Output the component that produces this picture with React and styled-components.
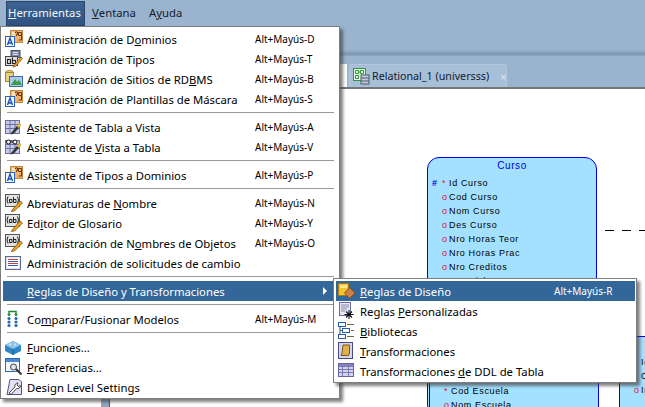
import React from 'react';
import styled, { createGlobalStyle } from 'styled-components';

const GlobalStyle = createGlobalStyle`
  html, body { margin: 0; padding: 0; background: #fff; }
  body { font-family: "Noto Sans", "Liberation Sans", sans-serif; }
`;

// --- Window chrome ---

const Frame = styled.div`
  position: relative;
  width: 645px;
  height: 407px;
  overflow: hidden;
  display: flex;
  flex-direction: column;
  background: #9ab4d0;
`;

const MenuBar = styled.div`
  height: 25px;
  margin-top: 1px;
  padding-left: 6px;
  display: flex;
  align-items: stretch;
  flex-shrink: 0;
`;

const BarItem = styled.div`
  display: flex;
  align-items: center;
  width: ${p => p.$w}px;
  padding-left: ${p => p.$pad}px;
  padding-bottom: 2px;
  box-sizing: border-box;
  font-size: 11.3px;
  color: ${p => (p.$open ? '#f2f6fb' : '#14202e')};
  background: ${p => (p.$open ? 'linear-gradient(180deg, #3d6494, #2f5180)' : 'transparent')};
  box-shadow: ${p => (p.$open ? 'inset 0 0 0 1px #2a466c' : 'none')};
`;

const ToolBand = styled.div`
  height: 30px;
  flex-shrink: 0;
  background: linear-gradient(180deg, #9ab4d0 0, #9ab4d0 24px, #7d97b3 28px, #8ea8c4 30px);
`;

const TabStrip = styled.div`
  height: 33px;
  flex-shrink: 0;
  display: flex;
  align-items: flex-end;
  border-bottom: 2px solid #777;
  box-sizing: border-box;
`;

const ActiveTab = styled.div`
  width: 347px;
  height: 23px;
  background: #fff;
  flex-shrink: 0;
`;

const Tab = styled.div`
  margin-left: 2px;
  width: 158px;
  height: 23px;
  box-sizing: border-box;
  padding-left: 2px;
  display: flex;
  align-items: center;
  gap: 2px;
  background: #a8bfd8;
  border: 1px solid #b4c8dd;
  border-bottom: none;
  border-radius: 4px 4px 0 0;
  font-size: 10.7px;
  color: #14202e;
  white-space: nowrap;
`;

const TabClose = styled.span`
  margin-left: 9px;
  color: #d5e0ec;
  font-size: 11px;
  font-weight: 700;
`;

// --- Diagram canvas ---

const Workspace = styled.div`
  flex: 1;
  display: flex;
  background: #fff;
  min-height: 0;
`;

const SidePane = styled.div`
  width: 101px;
  flex-shrink: 0;
`;

const Splitter = styled.div`
  width: 8px;
  flex-shrink: 0;
  background: #8fa6c2;
  border-right: 1px solid #555;
`;

const Diagram = styled.div`
  position: relative;
  flex: 1;
  overflow: hidden;
`;

const Entity = styled.div`
  position: absolute;
  left: ${p => p.$x}px;
  top: ${p => p.$y}px;
  width: ${p => p.$w}px;
  height: ${p => p.$h}px;
  box-sizing: border-box;
  background: #a4e0ff;
  border: 1px solid #0000ee;
  border-radius: 12px;
  font-family: "Liberation Sans", sans-serif;
  font-size: 9px;
  letter-spacing: 0.65px;
  color: #000;
`;

const EntityTitle = styled.div`
  height: 17px;
  line-height: 15px;
  text-align: center;
  color: #0000ee;
  font-size: 10px;
  letter-spacing: 0.6px;
`;

const EntityAttrs = styled.div`
  padding-top: ${p => p.$pad}px;
`;

const Attr = styled.div`
  height: 14px;
  line-height: 14px;
  display: flex;
  white-space: nowrap;
`;

const Key = styled.span`
  width: 10px;
  padding-left: 4px;
  color: #0000ee;
  font-weight: 700;
  flex-shrink: 0;
`;

const Flag = styled.span`
  width: 7px;
  color: #e0103a;
  flex-shrink: 0;
  letter-spacing: 0;
`;

const Relation = styled.div`
  position: absolute;
  left: 487px;
  top: 141px;
  width: 48px;
  height: 1px;
  background: repeating-linear-gradient(90deg, transparent 0 8px, #000 8px 17px);
`;

// --- Menus ---

const Popup = styled.div`
  position: absolute;
  left: ${p => p.$x}px;
  top: ${p => p.$y}px;
  width: ${p => p.$w}px;
  box-sizing: border-box;
  padding: 2px 1px 1px 2px;
  background: #fff;
  border: 1px solid #7d7d7d;
  box-shadow: 3px 3px 3px rgba(60, 60, 60, 0.65);
  color: #000;
  font-size: 11.3px;
`;

const Row = styled.div`
  height: 20px;
  display: flex;
  align-items: center;
  padding-left: 2px;
  background: ${p => (p.$hot ? '#336699' : 'transparent')};
  color: ${p => (p.$hot ? '#fff' : '#000')};
  white-space: nowrap;
`;

const IconSlot = styled.span`
  width: 18px;
  height: 18px;
  flex-shrink: 0;
  display: block;
  svg { display: block; }
`;

const Label = styled.span`
  width: ${p => p.$w}px;
  margin-left: 4px;
  flex-shrink: 0;
`;

const Shortcut = styled.span`
  font-size: 10px;
`;

const Arrow = styled.span`
  margin-left: 68px;
  width: 0;
  height: 0;
  border-left: 4px solid #fff;
  border-top: 4px solid transparent;
  border-bottom: 4px solid transparent;
`;

const Separator = styled.div`
  height: 8px;
  box-sizing: border-box;
  padding-top: 3px;
  margin: 0 4px;
  &::before {
    content: '';
    display: block;
    height: 1px;
    background: #9a9a9a;
  }
`;

// --- Icons ---

const Svg = ({ children }) => (
  <svg width="18" height="18" viewBox="0 0 18 18">{children}</svg>
);

const DomainIcon = () => (
  <Svg>
    <rect x="5.5" y="0.5" width="12" height="12" fill="#f2b26c" stroke="#c08840" />
    <rect x="7" y="2" width="3" height="4" fill="#fbe0b8" />
    <path d="M10.5 3V2h2v2.5h-1V6" fill="none" stroke="#6a3410" />
    <path d="M13.5 2.5h3v3h-3zM16.5 5.5V10h-3" fill="none" stroke="#6a3410" />
    <rect x="0.5" y="6.5" width="9" height="10" fill="#f2f7ff" stroke="#2a66c0" />
    <path d="M2.5 15l2.5-7 2.5 7M3.5 13h3" fill="none" stroke="#1a4fb0" strokeWidth="1.3" />
  </Svg>
);

const TypeIcon = () => (
  <Svg>
    <rect x="6" y="0.5" width="9" height="7" fill="#7d8aa8" stroke="#444c66" />
    <path d="M8 2.5h5M8 4.5h5" stroke="#d8deea" />
    <rect x="0.5" y="6.5" width="12" height="9" fill="#dcdcdc" stroke="#444" />
    <path d="M2.5 9.5h3v4h-3zM7.5 7.5v6h3v-3h-3" fill="none" stroke="#222" strokeWidth="1.1" />
    <path d="M9 15l7-8 1.5 1.5-7 8-2.5.5z" fill="#f0a020" stroke="#7a4a08" strokeWidth=".7" />
  </Svg>
);

const SiteIcon = () => (
  <Svg>
    <ellipse cx="4.5" cy="2.5" rx="4" ry="2" fill="#e8d080" stroke="#a08838" />
    <rect x="0.5" y="2.5" width="8" height="9" fill="#e8d080" stroke="#a08838" />
    <rect x="4.5" y="6.5" width="13" height="10" fill="#a8cce8" stroke="#3a6ea8" />
    <path d="M6 15l4-6 2 3 2-2 3 5z" fill="#3c9a48" />
  </Svg>
);

const TableWizardIcon = ({ glasses }) => (
  <Svg>
    <rect x="0.5" y="2.5" width="14" height="13" fill="#c8cce8" stroke="#6a70a0" />
    <path d="M0.5 6.5h14M0.5 10.5h14M5 2.5v13M10 2.5v13" stroke="#6a70a0" />
    {glasses && (
      <>
        <circle cx="3.5" cy="4" r="2" fill="#fff" stroke="#111" />
        <circle cx="10" cy="4" r="2" fill="#fff" stroke="#111" />
        <path d="M5.5 4h2.5" stroke="#111" />
      </>
    )}
    <path d="M6 15l6-7 2 2-6 6-2.5.5z" fill="#333" />
    <path d="M12 8l2-3 2 1.5-2 3.5z" fill="#f0c040" stroke="#a07a10" strokeWidth=".5" />
  </Svg>
);

const AbbrevIcon = () => (
  <Svg>
    <rect x="0.5" y="0.5" width="14" height="12" fill="#e4e4e4" stroke="#555" />
    <path d="M3 2.5l-1 3.5 1 3.5M12.5 2.5l1 3.5-1 3.5M4.5 5.5h2.5v3H4.5zM8.5 3v5.5h2.5V5.5H8.5" fill="none" stroke="#222" />
    <path d="M7 16l8-9 2.5 2-8 8-3 .5z" fill="#f0a020" stroke="#6e4406" strokeWidth=".7" />
  </Svg>
);

const ListIcon = () => (
  <Svg>
    <rect x="0.5" y="2.5" width="15" height="13" fill="#dfe6f4" stroke="#5a6a98" />
    <rect x="2" y="4" width="12" height="10" fill="#fff" />
    <path d="M3 5.5h10" stroke="#d04030" />
    <path d="M3 7.5h10" stroke="#3060c0" />
    <path d="M3 9.5h10" stroke="#d04030" />
    <path d="M3 11.5h10" stroke="#3060c0" />
  </Svg>
);

const CompareIcon = () => (
  <Svg>
    <path d="M4 4.5V1.5h7V4.5" fill="none" stroke="#1c8a30" strokeWidth="1.5" />
    <path d="M2 4h4L4 6.5zM9 4h4l-2 2.5z" fill="#1c8a30" />
    <g fill="#2c68b0">
      <circle cx="4" cy="8.5" r="1.6" />
      <circle cx="11" cy="8.5" r="1.6" />
      <circle cx="4" cy="12" r="1.6" />
      <circle cx="11" cy="12" r="1.6" />
      <circle cx="4" cy="15.5" r="1.6" />
      <circle cx="11" cy="15.5" r="1.6" />
    </g>
  </Svg>
);

const BlockIcon = () => (
  <Svg>
    <path d="M0 7l8-4 8 4v6l-8 4-8-4z" fill="#2f86c4" />
    <path d="M0 7l8 4 8-4-8-4z" fill="#8cc4ea" />
    <path d="M8 11v6" stroke="#1e5e90" />
    <circle cx="5" cy="6.5" r="1.2" fill="#c4e2f6" />
    <circle cx="10" cy="6.5" r="1.2" fill="#c4e2f6" />
  </Svg>
);

const PrefsIcon = () => (
  <Svg>
    <rect x="0.5" y="0.5" width="14" height="13" fill="#eef5ff" stroke="#2f6cb8" />
    <rect x="1" y="1" width="13" height="3" fill="#4a8ad4" />
    <circle cx="8.5" cy="9" r="3" fill="#e4e4e4" stroke="#444" />
    <path d="M11 11l5.5 5.5" stroke="#333" strokeWidth="2" />
  </Svg>
);

const WrenchIcon = () => (
  <Svg>
    <path d="M5 1.5h9l2.5 2.5v12.5H2z" fill="#e2e0f2" stroke="#55527a" />
    <path d="M4 15l6-6a3 3 0 0 1 3-4l-1 2 1.5 1.5 2-1a3 3 0 0 1-4 3l-5.5 6z" fill="#fff" stroke="#333" strokeWidth=".9" />
  </Svg>
);

const RulesIcon = () => (
  <Svg>
    <path d="M0.5 1.5h10v12h-10z" fill="#f4c22c" stroke="#a87a10" />
    <path d="M2 3h7v3H2z" fill="#fbe68c" />
    <path d="M6.5 11l5-5.5 5.5 5.5-5.5 5.5z" fill="#cc8244" stroke="#7a4418" strokeWidth=".8" />
  </Svg>
);

const CustomRulesIcon = () => (
  <Svg>
    <rect x="1.5" y="0.5" width="11" height="13" fill="#e8e8f6" stroke="#6a6a98" />
    <path d="M3 3h8M3 5h8M3 7h6M3 9h4" stroke="#8888b0" />
    <path d="M11 8v9M6.5 12.5h9M8 9.5l6 6M14 9.5l-6 6" stroke="#111" strokeWidth="1.1" />
  </Svg>
);

const LibraryIcon = () => (
  <Svg>
    <rect x="0.5" y="0.5" width="7" height="4" fill="#fff" stroke="#2060b0" />
    <rect x="4.5" y="6.5" width="7" height="4" fill="#fff" stroke="#2060b0" />
    <rect x="0.5" y="12.5" width="7" height="4" fill="#fff" stroke="#2060b0" />
    <path d="M9 2.5h7M13 8.5h3M9 14.5h7M2 5v8M2 8.5h2" stroke="#666" strokeWidth="1.2" fill="none" />
  </Svg>
);

const ScrollIcon = () => (
  <Svg>
    <rect x="0.5" y="0.5" width="14" height="16" fill="#d4d4ec" stroke="#4a4a80" />
    <path d="M5 3h6.5v8l-1 2.5H3l1-2.5z" fill="#e0b050" stroke="#7a5a14" />
  </Svg>
);

const GridIcon = () => (
  <Svg>
    <rect x="0.5" y="1.5" width="15" height="13" fill="#d4d4f0" stroke="#6464a0" />
    <rect x="1" y="2" width="14" height="2" fill="#8484c0" />
    <path d="M0.5 4.5h15M0.5 7.5h15M0.5 10.5h15M4.5 1.5v13M10.5 1.5v13" stroke="#7a7ab0" />
  </Svg>
);

const ModelIcon = () => (
  <Svg>
    <rect x="1.5" y="1.5" width="12" height="12" fill="#e6f6e0" stroke="#2c9a3c" />
    <path d="M3.5 3.5h3v3h-3zM8.5 3.5h3v3h-3zM3.5 8.5h3v3h-3zM6.5 5h2" fill="none" stroke="#2c9a3c" />
    <rect x="9" y="8" width="8" height="9" fill="#c4ccd8" stroke="#4a5a70" />
    <path d="M9 11h8M9 14h8" stroke="#4a5a70" />
  </Svg>
);

// --- Data ---

// An underscore marks the mnemonic letter of a label
const Mnemonic = ({ text }) => {
  const at = text.indexOf('_');
  if (at < 0) return text;
  return (
    <>
      {text.slice(0, at)}
      <u>{text[at + 1]}</u>
      {text.slice(at + 2)}
    </>
  );
};

const MAIN_MENU = [
  { icon: DomainIcon, label: 'Administración de D_ominios', key: 'Alt+Mayús-D' },
  { icon: TypeIcon, label: 'Adminis_tración de Tipos', key: 'Alt+Mayús-T' },
  { icon: SiteIcon, label: 'Administración de Sitios de RD_BMS', key: 'Alt+Mayús-B' },
  { icon: DomainIcon, label: 'Adminis_tración de Plantillas de Máscara', key: 'Alt+Mayús-S' },
  'sep',
  { icon: TableWizardIcon, label: '_Asistente de Tabla a Vista', key: 'Alt+Mayús-A' },
  { icon: () => <TableWizardIcon glasses />, label: 'Asistente de _Vista a Tabla', key: 'Alt+Mayús-V' },
  'sep',
  { icon: DomainIcon, label: 'Asist_ente de Tipos a Dominios', key: 'Alt+Mayús-P' },
  'sep',
  { icon: AbbrevIcon, label: 'Abreviaturas de _Nombre', key: 'Alt+Mayús-N' },
  { icon: AbbrevIcon, label: 'Ed_itor de Glosario', key: 'Alt+Mayús-Y' },
  { icon: AbbrevIcon, label: 'Administración de N_ombres de Objetos', key: 'Alt+Mayús-O' },
  { icon: ListIcon, label: 'Administración de solicitudes de cambio' },
  'sep',
  { label: '_Reglas de Diseño y Transformaciones', hot: true, arrow: true },
  'sep',
  { icon: CompareIcon, label: 'Co_mparar/Fusionar Modelos', key: 'Alt+Mayús-M' },
  'sep',
  { icon: BlockIcon, label: '_Funciones...' },
  { icon: PrefsIcon, label: '_Preferencias...' },
  { icon: WrenchIcon, label: 'Design Level Settings' },
];

const SUB_MENU = [
  { icon: RulesIcon, label: '_Reglas de Diseño', key: 'Alt+Mayús-R', hot: true },
  { icon: CustomRulesIcon, label: 'Reglas _Personalizadas' },
  { icon: LibraryIcon, label: '_Bibliotecas' },
  { icon: ScrollIcon, label: '_Transformaciones' },
  { icon: GridIcon, label: 'Transformaciones _de DDL de Tabla' },
];

const CURSO_ATTRS = ['Cod Curso', 'Nom Curso', 'Des Curso', 'Nro Horas Teor', 'Nro Horas Prac', 'Nro Creditos', 'Nro Ciclo'];

const MenuRows = ({ items, labelWidth }) =>
  items.map((item, i) => {
    if (item === 'sep') return <Separator key={i} />;
    const Icon = item.icon;
    return (
      <Row key={i} $hot={item.hot}>
        <IconSlot>{Icon && <Icon />}</IconSlot>
        <Label $w={labelWidth}><Mnemonic text={item.label} /></Label>
        {item.key && <Shortcut>{item.key}</Shortcut>}
        {item.arrow && <Arrow />}
      </Row>
    );
  });

const App = () => (
  <Frame>
    <GlobalStyle />
    <MenuBar>
      <BarItem $open $w={79} $pad={2}><Mnemonic text="_Herramientas" /></BarItem>
      <BarItem $w={57} $pad={7}><Mnemonic text="_Ventana" /></BarItem>
      <BarItem $w={50} $pad={7}><Mnemonic text="A_yuda" /></BarItem>
    </MenuBar>
    <ToolBand />
    <TabStrip>
      <ActiveTab />
      <Tab>
        <IconSlot><ModelIcon /></IconSlot>
        Relational_1 (universss)
        <TabClose>×</TabClose>
      </Tab>
    </TabStrip>
    <Workspace>
      <SidePane />
      <Splitter />
      <Diagram>
        <Entity $x={317} $y={68} $w={170} $h={260}>
          <EntityTitle>Curso</EntityTitle>
          <EntityAttrs $pad={1}>
            <Attr><Key>#</Key><Flag>*</Flag>Id Curso</Attr>
            {CURSO_ATTRS.map(name => (
              <Attr key={name}><Key /><Flag>o</Flag>{name}</Attr>
            ))}
          </EntityAttrs>
        </Entity>
        <Relation />
        <Entity $x={319} $y={263} $w={170} $h={80}>
          <EntityAttrs $pad={31}>
            <Attr><Key /><Flag>*</Flag>Cod Escuela</Attr>
            <Attr><Key /><Flag>o</Flag>Nom Escuela</Attr>
          </EntityAttrs>
        </Entity>
        <Entity $x={509} $y={247} $w={170} $h={100}>
          <EntityAttrs $pad={18}>
            <Attr><Key /><Flag />Id</Attr>
            <Attr><Key /><Flag />Cod</Attr>
            <Attr><Key /><Flag>o</Flag>Ind</Attr>
          </EntityAttrs>
        </Entity>
      </Diagram>
    </Workspace>
    <Popup $x={0} $y={26} $w={340}>
      <MenuRows items={MAIN_MENU} labelWidth={228} />
    </Popup>
    <Popup $x={333} $y={278} $w={304}>
      <MenuRows items={SUB_MENU} labelWidth={194} />
    </Popup>
  </Frame>
);

export default App;
